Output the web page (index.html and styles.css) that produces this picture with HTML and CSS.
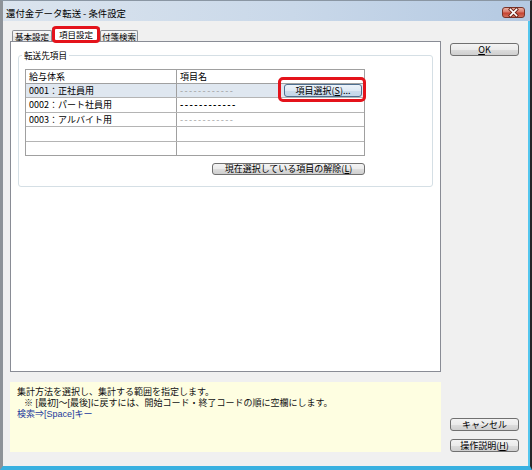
FILE: index.html
```html
<!DOCTYPE html>
<html lang="ja">
<head>
<meta charset="utf-8">
<title>還付金データ転送 - 条件設定</title>
<link rel="stylesheet" href="styles.css">
</head>
<body>
<div class="window">
  <div class="titlebar">
    <span class="title">還付金データ転送 - 条件設定</span>
    <span class="close">
      <svg width="23" height="11" viewBox="0 0 23 11">
        <path d="M8.5 2.5 L14.5 8.5 M14.5 2.5 L8.5 8.5" stroke="#6a2419" stroke-width="3.4" stroke-linecap="square"/>
        <path d="M8.5 2.5 L14.5 8.5 M14.5 2.5 L8.5 8.5" stroke="#ffffff" stroke-width="1.7" stroke-linecap="square"/>
      </svg>
    </span>
  </div>
  <div class="client">
    <div class="left">
      <div class="tabs">
        <div class="tab tab-basic">基本設定</div>
        <div class="tab tab-active">項目設定</div>
        <div class="tab tab-search">付箋検索</div>
      </div>
      <div class="panel">
        <fieldset class="group">
          <legend class="group-label">転送先項目</legend>
          <div class="grid">
            <div class="row row-head">
              <div class="c1">給与体系</div>
              <div class="c2">項目名</div>
            </div>
            <div class="row row-sel r1">
              <div class="c1">0001：正社員用</div>
              <div class="c2 c2-flex">
                <span class="dash dash-light">------------</span>
                <span class="sel-wrap"><button class="btn btn-select">項目選択(<u>S</u>)...</button></span>
              </div>
            </div>
            <div class="row r2">
              <div class="c1">0002：パート社員用</div>
              <div class="c2"><span class="dash dash-dark">------------</span></div>
            </div>
            <div class="row r3">
              <div class="c1">0003：アルバイト用</div>
              <div class="c2"><span class="dash dash-light">------------</span></div>
            </div>
            <div class="row r4">
              <div class="c1"></div>
              <div class="c2"></div>
            </div>
            <div class="row r5">
              <div class="c1"></div>
              <div class="c2"></div>
            </div>
          </div>
          <div class="actions">
            <button class="btn btn-clear">現在選択している項目の解除(<u>L</u>)</button>
          </div>
        </fieldset>
      </div>
      <div class="hint">
        <div class="hint-line">集計方法を選択し、集計する範囲を指定します。</div>
        <div class="hint-line indent">※ [最初]～[最後]に戻すには、開始コード・終了コードの順に空欄にします。</div>
        <div class="hint-line hint-key">検索⇒[Space]キー</div>
      </div>
    </div>
    <div class="right">
      <button class="btn btn-ok"><u>O</u>K</button>
      <div class="spacer"></div>
      <button class="btn">キャンセル</button>
      <button class="btn btn-help">操作説明(<u>H</u>)</button>
    </div>
  </div>
</div>
</body>
</html>
```
FILE: styles.css
```css
* { box-sizing: border-box; }
html, body { margin: 0; padding: 0; }
body {
  width: 532px;
  height: 470px;
  overflow: hidden;
  background: #fff;
  font-family: "Noto Sans CJK JP", "Noto Sans", sans-serif;
  font-size: 9px;
  color: #000;
}
.window {
  width: 532px;
  height: 470px;
  display: flex;
  flex-direction: column;
  background: #f0f0f0;
  border-top: 1px solid #8a96a3;
  border-left: 3px solid #8d9298;
  border-right: 2px solid #262626;
  border-bottom: 4px solid #38b0e0;
}
.titlebar {
  height: 20px;
  display: flex;
  align-items: center;
  padding: 4px 3px 0 3px;
  background: linear-gradient(to right, #dbe4ee, #c9d8e9 55%, #b4c9e2);
}
.title {
  font-size: 9.4px;
  line-height: 12px;
  color: #000;
}
.close {
  margin-left: auto;
  margin-right: 2px;
  align-self: flex-start;
  margin-top: 2px;
  width: 23px;
  height: 11px;
  border: 1px solid #7a3328;
  border-radius: 3px;
  background: linear-gradient(#eab0a2, #d8776a 45%, #c5412f 55%, #d2705e);
  display: flex;
  align-items: center;
  justify-content: center;
}
.close svg { display: block; margin: -1px; }
.client {
  flex: 1;
  display: flex;
  gap: 9px;
  padding: 4px 9px 14px 7px;
  border-right: 2px solid #54c6ee;
}
.left {
  width: 431px;
  flex: none;
  display: flex;
  flex-direction: column;
}
.tabs {
  height: 16px;
  display: flex;
  align-items: flex-end;
  padding-left: 2px;
  position: relative;
  z-index: 1;
}
.tab {
  height: 11px;
  border: 1px solid #8c8e94;
  border-bottom: none;
  border-radius: 2px 2px 0 0;
  background: linear-gradient(#f8f8f8, #eeeeee 50%, #e2e2e2 51%, #e8e8e8);
  font-size: 8.5px;
  line-height: 10px;
  text-align: center;
  color: #000;
}
.tab-basic { width: 40px; }
.tab-search { width: 38px; }
.tab-active {
  width: 48px;
  height: 15px;
  margin-bottom: -1px;
  background: #fff;
  line-height: 13px;
  position: relative;
}
.tab-active::after {
  content: "";
  position: absolute;
  top: -2px;
  left: -1px;
  right: -1px;
  bottom: -1px;
  border: 3px solid #e4131b;
  border-radius: 4px;
}
.panel {
  height: 331px;
  flex: none;
  background: #fff;
  border: 1px solid #898c95;
}
.group {
  margin: 7px 7px 0;
  padding: 0 6px 11px;
  border: 1px solid #d5dfe5;
  border-radius: 3px;
  min-inline-size: 0;
}
.group-label {
  margin-left: -3px;
  padding: 0 2px;
  font-size: 8.6px;
  line-height: 12px;
  color: #000;
}
.grid {
  width: 340px;
  margin-top: 8px;
  border: 1px solid #a0a0a0;
}
.row {
  display: grid;
  grid-template-columns: 151px 1fr;
  height: 14px;
  border-bottom: 1px solid #b4b4b4;
}
.row-head { border-bottom-color: #a0a0a0; }
.r2 { height: 15px; }
.r4 { height: 15px; }
.r5 { height: 13px; border-bottom: none; }
.row-sel { background: #dfe7f0; }
.c1 {
  border-right: 1px solid #a0a0a0;
  padding-left: 3px;
  line-height: 13px;
  white-space: nowrap;
}
.c2 {
  padding-left: 3px;
  line-height: 13px;
  white-space: nowrap;
}
.c2-flex {
  display: flex;
  align-items: flex-start;
  justify-content: space-between;
}
.dash { letter-spacing: 1.4px; }
.dash-light { color: #9a9a9a; }
.dash-dark { color: #000; font-weight: bold; }
.sel-wrap {
  position: relative;
  display: block;
  margin-right: 2px;
}
.sel-wrap::after {
  content: "";
  position: absolute;
  top: -7px;
  left: -6px;
  right: -4px;
  bottom: -5px;
  border: 3px solid #e4131b;
  border-radius: 5px;
  pointer-events: none;
}
.btn {
  display: block;
  height: 13px;
  padding: 0;
  border: 1px solid #707070;
  border-radius: 3px;
  background: linear-gradient(#f3f3f3, #ebebeb 50%, #dddddd 51%, #cfcfcf);
  font-family: "Noto Sans CJK JP", "Noto Sans", sans-serif;
  font-size: 9px;
  line-height: 11px;
  color: #000;
  text-align: center;
  white-space: nowrap;
}
.btn u { text-underline-offset: 1px; }
.btn-select {
  width: 78px;
  height: 13px;
  border-color: #4f6f8f;
  background: linear-gradient(#ecf3fa, #dfeaf5 50%, #ccdcec 51%, #c4d7ea);
}
.actions {
  width: 340px;
  display: flex;
  justify-content: flex-end;
  margin-top: 7px;
}
.btn-clear { width: 153px; height: 12px; line-height: 10px; }
.hint {
  height: 70px;
  flex: none;
  margin-top: 10px;
  padding: 5px 7px;
  background: #fefee1;
  font-family: "Liberation Sans", "Noto Sans CJK JP", sans-serif;
  line-height: 11px;
  color: #111;
  white-space: nowrap;
}
.hint-line { height: 11px; }
.indent { padding-left: 7px; }
.hint-key { color: #23399c; }
.right {
  flex: 1;
  display: flex;
  flex-direction: column;
}
.btn-ok { margin-top: 18px; }
.spacer { flex: 1; }
.btn-help { margin-top: 8px; }
```
